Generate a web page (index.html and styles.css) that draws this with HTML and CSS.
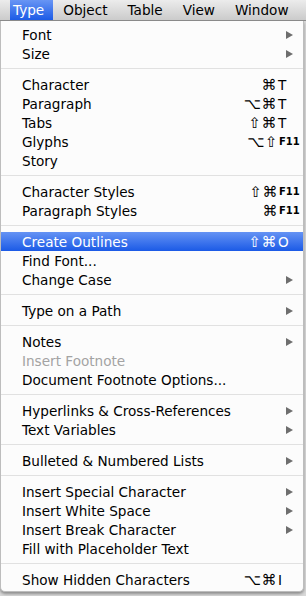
FILE: index.html
```html
<!DOCTYPE html>
<html lang="en">
<head>
    <meta charset="UTF-8">
    <title>Type Menu</title>
    <link rel="stylesheet" href="styles.css">
</head>
<body>
    <div class="menubar">
        <span class="bar-item active">Type</span>
        <span class="bar-item">Object</span>
        <span class="bar-item">Table</span>
        <span class="bar-item">View</span>
        <span class="bar-item">Window</span>
        <span class="bar-item">H</span>
    </div>

    <div class="menu">
        <div class="item"><span class="label">Font</span><span class="arrow"></span></div>
        <div class="item"><span class="label">Size</span><span class="arrow"></span></div>
        <div class="sep"></div>

        <div class="item"><span class="label">Character</span><span class="keys"><span class="mods">⌘</span><span class="key">T</span></span></div>
        <div class="item"><span class="label">Paragraph</span><span class="keys"><span class="mods">⌥⌘</span><span class="key">T</span></span></div>
        <div class="item"><span class="label">Tabs</span><span class="keys"><span class="mods">⇧⌘</span><span class="key">T</span></span></div>
        <div class="item"><span class="label">Glyphs</span><span class="keys"><span class="mods">⌥⇧</span><span class="key fkey">F11</span></span></div>
        <div class="item"><span class="label">Story</span></div>
        <div class="sep"></div>

        <div class="item"><span class="label">Character Styles</span><span class="keys"><span class="mods">⇧⌘</span><span class="key fkey">F11</span></span></div>
        <div class="item"><span class="label">Paragraph Styles</span><span class="keys"><span class="mods">⌘</span><span class="key fkey">F11</span></span></div>
        <div class="sep"></div>

        <div class="item selected"><span class="label">Create Outlines</span><span class="keys"><span class="mods">⇧⌘</span><span class="key">O</span></span></div>
        <div class="item"><span class="label">Find Font...</span></div>
        <div class="item"><span class="label">Change Case</span><span class="arrow"></span></div>
        <div class="sep"></div>

        <div class="item"><span class="label">Type on a Path</span><span class="arrow"></span></div>
        <div class="sep"></div>

        <div class="item"><span class="label">Notes</span><span class="arrow"></span></div>
        <div class="item disabled"><span class="label">Insert Footnote</span></div>
        <div class="item"><span class="label">Document Footnote Options...</span></div>
        <div class="sep"></div>

        <div class="item"><span class="label">Hyperlinks &amp; Cross-References</span><span class="arrow"></span></div>
        <div class="item"><span class="label">Text Variables</span><span class="arrow"></span></div>
        <div class="sep"></div>

        <div class="item"><span class="label">Bulleted &amp; Numbered Lists</span><span class="arrow"></span></div>
        <div class="sep"></div>

        <div class="item"><span class="label">Insert Special Character</span><span class="arrow"></span></div>
        <div class="item"><span class="label">Insert White Space</span><span class="arrow"></span></div>
        <div class="item"><span class="label">Insert Break Character</span><span class="arrow"></span></div>
        <div class="item"><span class="label">Fill with Placeholder Text</span></div>
        <div class="sep"></div>

        <div class="item"><span class="label">Show Hidden Characters</span><span class="keys"><span class="mods">⌥⌘</span><span class="key">I</span></span></div>
    </div>
</body>
</html>
```

FILE: styles.css
```css
* {
    margin: 0;
    padding: 0;
    box-sizing: border-box;
}

body {
    width: 306px;
    height: 596px;
    overflow: hidden;
    font-family: "DejaVu Sans", "Liberation Sans", sans-serif;
    font-size: 13.6px;
    color: #000;
    background: #d9d9d9;
}

/* top menu bar */
.menubar {
    display: flex;
    height: 21px;
    padding-left: 10px;
    overflow: hidden;
    background: linear-gradient(#ececec, #cbcbcb);
    border-bottom: 1px solid #8c8c8c;
    white-space: nowrap;
}

.bar-item {
    display: flex;
    align-items: center;
    padding: 0 10px;
    font-size: 13.6px;
}

.bar-item.active {
    color: #fff;
    padding: 0 9px 0 3px;
    background: linear-gradient(#6895f4, #1c5be6);
}

/* dropdown panel */
.menu {
    width: 304px;
    height: 571px;
    padding-top: 4px;
    background: #fcfcfc;
    border: 1px solid #bdbdbd;
    border-top: none;
    border-radius: 0 0 5px 5px;
    box-shadow: 0 2px 3px rgba(0, 0, 0, 0.35);
}

.item {
    display: flex;
    align-items: center;
    height: 19px;
    padding: 0 6px 0 21px;
    white-space: nowrap;
}

.label {
    flex: 1;
}

.item.selected {
    color: #fff;
    background: linear-gradient(#6593f4, #1b5ae6);
}

.item.disabled {
    color: #a3a3a3;
}

.keys {
    display: flex;
    align-items: center;
}

.mods {
    font-size: 15px;
    letter-spacing: 0.5px;
}

.key {
    width: 20px;
    padding-left: 1px;
}

.fkey {
    width: 19px;
    font-size: 10px;
    font-weight: bold;
}

.arrow {
    width: 0;
    height: 0;
    margin-right: 4px;
    border-top: 4.5px solid transparent;
    border-bottom: 4.5px solid transparent;
    border-left: 7px solid #6e6e6e;
}

.sep {
    height: 12px;
    padding-top: 5px;
}

.sep::after {
    content: '';
    display: block;
    height: 1px;
    background: #e1e1e1;
}
```
